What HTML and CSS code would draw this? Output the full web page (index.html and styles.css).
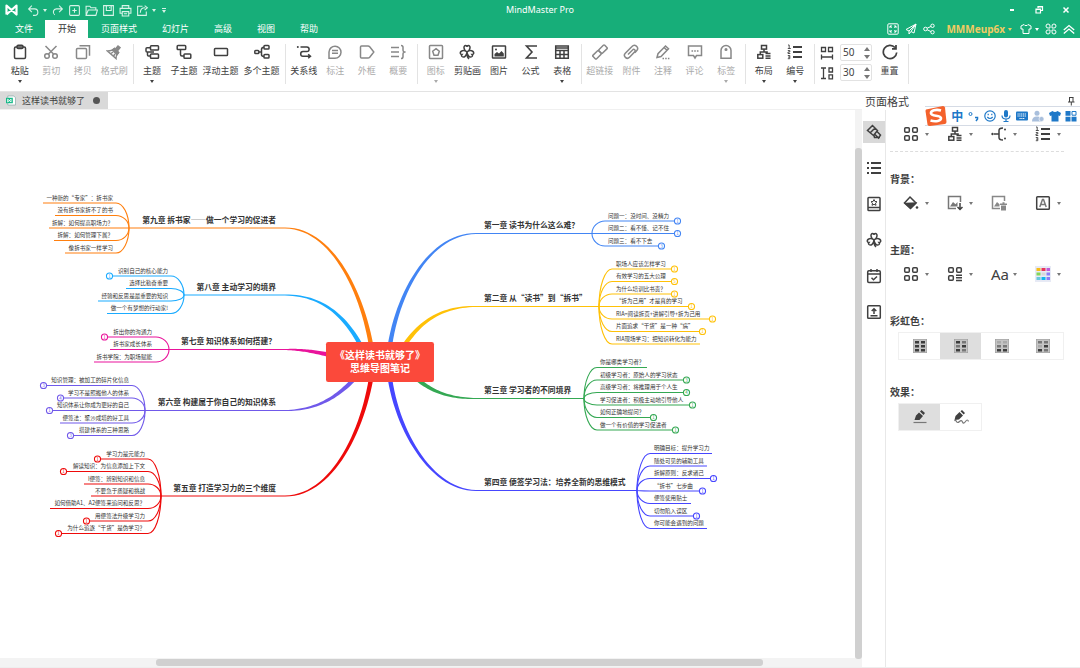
FILE: index.html
```
<!DOCTYPE html>
<html lang="zh-CN">
<head>
<meta charset="utf-8">
<meta name="viewport" content="width=device-width, initial-scale=1">
<title>MindMaster Pro</title>
<link rel="stylesheet" href="styles.css">
</head>
<body>
<svg class="sprite" aria-hidden="true">
  <symbol id="logo" viewBox="0 0 14 12"><path d="M2 10.500V1.500L12 10.500V1.500L2 10.500" fill="none" stroke="currentColor" stroke-width="2.200" stroke-linejoin="round"/></symbol>
  <symbol id="undo" viewBox="0 0 12 12"><path d="M4.500 1.500 1.500 4.500l3 3M2 4.500h5a3 3 0 0 1 0 6H5.500"/></symbol>
  <symbol id="redo" viewBox="0 0 12 12"><path d="M7.500 1.500l3 3-3 3M10 4.500H5a3 3 0 0 0-1.500 5.500"/></symbol>
  <symbol id="new" viewBox="0 0 12 12"><rect x="1.500" y="1.500" width="9" height="9" rx="1"/><path d="M6 4v4M4 6h4"/></symbol>
  <symbol id="open" viewBox="0 0 12 12"><path d="M1 10V2h3.500l1 1.500H10V5M1 10.500 3 5.500h8.500L10 10.500z"/></symbol>
  <symbol id="save" viewBox="0 0 12 12"><path d="M1.500 1.500h9v9h-9zM4 1.500V6h4.500V1.500M7 3v1"/></symbol>
  <symbol id="print" viewBox="0 0 12 12"><path d="M3 4V1.500h6V4M3 8.500H1V4h10v4.500H9M3 7h6v4H3zM4.500 9h3"/></symbol>
  <symbol id="export" viewBox="0 0 12 12"><path d="M6 2H1.500v8.500h8V7M4 8c0-3 1.500-4.500 4.500-4.500M8 1.500l2.500 2L8 5.500"/></symbol>
  <symbol id="full" viewBox="0 0 12 12"><rect x=".8" y=".8" width="10.400" height="10.400" rx="1"/><path d="M3 5V3h2M9 5V3H7M3 7v2h2M9 7v2H7M3 3l1.700 1.700M9 3 7.300 4.700M3 9l1.700-1.700M9 9 7.300 7.300"/></symbol>
  <symbol id="send" viewBox="0 0 12 12"><path d="M11 1 1 6.500l3 1.500L11 1 9 10 6 8.500M4 8v3l2-2.500L11 1"/></symbol>
  <symbol id="share" viewBox="0 0 12 12"><circle cx="2.500" cy="6" r="1.800"/><circle cx="9.500" cy="2.800" r="1.700"/><circle cx="9.500" cy="9.200" r="1.700"/><path d="m4.200 5.200 3.700-1.700M4.200 6.800l3.700 1.700"/></symbol>
  <symbol id="shirt" viewBox="0 0 12 12"><path d="M4 1.500 1 3v3h2v4.500h6V6h2V3L8 1.500C7.500 3 4.500 3 4 1.500z"/></symbol>
  <symbol id="apps" viewBox="0 0 12 12"><path d="M5 5V3.200A2 2 0 1 0 3.200 5zM7 5V3.200A2 2 0 1 1 8.800 5zM5 7v1.800A2 2 0 1 1 3.200 7zM7 7v1.800A2 2 0 1 0 8.800 7z"/></symbol>
  <symbol id="collapse" viewBox="0 0 12 12"><path d="m.8 7 5.200-4.500L11.200 7M.8 10.500 6 6l5.200 4.500" stroke-width="1.300"/></symbol>
  <symbol id="restore" viewBox="0 0 12 12"><path d="M5 4V2.500h4.500V6.500H8M3 5h4.500v4H3zM3 5.500h4.500M5 3h4.500" stroke-width="1.200"/></symbol>
  <symbol id="close" viewBox="0 0 12 12"><path d="m3.500 3.500 5 5M8.500 3.500l-5 5" stroke-width="1.500"/></symbol>
  <symbol id="pin" viewBox="0 0 12 12"><path d="M4 2.500h4.500M4.500 2.500v4.500M3 7h6.500M8 2.500V7M6.300 7v3.500" stroke-width="1"/></symbol>

  <symbol id="paste" viewBox="0 0 16 16"><rect x="2.500" y="3" width="11" height="11.500" rx="1.200"/><rect x="5" y="1.300" width="6" height="3.200" rx="1.200"/></symbol>
  <symbol id="cut" viewBox="0 0 16 16"><circle cx="4" cy="12" r="2.300"/><circle cx="12" cy="12" r="2.300"/><path d="M2.500 2 10.500 10M13.500 2 5.500 10"/></symbol>
  <symbol id="copy" viewBox="0 0 16 16"><rect x="1.500" y="4.500" width="10" height="10" rx="1"/><path d="M4.500 1.700h10v10"/></symbol>
  <symbol id="brush" viewBox="0 0 16 16"><path d="m9.500 5 2.500-3 2 1.700-2.500 3" fill="currentColor"/><path d="M1.500 7Q6 7 8.500 4.500L12.500 8.500Q10 11 10 14.500z"/><path d="M6.500 6 8.500 4.500 12.500 8.500 11 10.500z" fill="currentColor"/><path d="M5 9.500 7 8M7.500 12 9 10"/></symbol>
  <symbol id="topic" viewBox="0 0 16 16"><rect x="6.500" y="1.700" width="8" height="4.300" rx=".8"/><rect x="6.500" y="10" width="8" height="4.300" rx=".8"/><path d="M6.500 3.800H3q-1 0-1 1v2.200q0 1 1 1h7M3.500 8v3q0 1 1 1h2"/></symbol>
  <symbol id="subtopic" viewBox="0 0 16 16"><rect x="1.200" y="1.500" width="8.500" height="4" rx=".8"/><rect x="8" y="10" width="6.800" height="4.300" rx=".8"/><path d="M4.500 5.500v5q0 1.500 1.500 1.500h2"/></symbol>
  <symbol id="float" viewBox="0 0 16 16"><rect x="1.500" y="4.500" width="13" height="7" rx=".8"/></symbol>
  <symbol id="multi" viewBox="0 0 16 16"><rect x=".8" y="6.500" width="4" height="3" rx=".8"/><rect x="10" y="1.500" width="5" height="3.500" rx=".8"/><rect x="10" y="10.500" width="5" height="3.500" rx=".8"/><path d="M5 8h2.500M10 3.200q-2.500 0-2.500 2.300v5q0 2 2.500 2"/></symbol>
  <symbol id="relation" viewBox="0 0 16 16"><path d="M4.500 3h6.300a2.300 2.300 0 0 1 0 4.600H7a2.200 2.200 0 0 0 0 4.600h6.500M12.200 10.200l2.300 2-2.300 2"/><circle cx="1.800" cy="3" r="1" fill="currentColor" stroke="none"/></symbol>
  <symbol id="callout" viewBox="0 0 16 16"><path d="M2 14.300V8a6 6 0 1 1 6 6.200zM5 6.500h6M5 9.300h6"/></symbol>
  <symbol id="boundary" viewBox="0 0 16 16"><path d="M2.500 2h6.500q1 0 1.700.8L14.800 8l-4.100 5.200q-.7.800-1.700.8H2.500q-1 0-1-1V3q0-1 1-1z"/></symbol>
  <symbol id="summary" viewBox="0 0 16 16"><path d="M1 3.500h8M1 8h8M1 12.500h8M11 1.500q2 0 2 1.800v2.900q0 1.300 1.500 1.800-1.500.5-1.500 1.800v2.900q0 1.800-2 1.800"/></symbol>
  <symbol id="mark" viewBox="0 0 16 16"><rect x="1.500" y="1.500" width="13" height="13" rx=".8"/><path d="m8 4.700 3.300 2.500-1.300 4H6l-1.300-4z"/></symbol>
  <symbol id="clover" viewBox="0 0 16 16"><path d="M8 8C4.500 6.500 4 1.500 6.700 1.500Q8 1.500 8 3q0-1.500 1.300-1.500C12 1.500 11.500 6.500 8 8zM8 8c3-2.500 7-1.500 6.700 1.300q-.2 1.200-1.700 1.200 1 1.200 0 2C11 14 8.500 12 8 8zM8 8C5 5.500 1 6.500 1.300 9.300q.2 1.200 1.700 1.200-1 1.200 0 2C5 14 7.500 12 8 8zM8 8q-.3 5 2 7"/></symbol>
  <symbol id="image" viewBox="0 0 16 16"><rect x="1.500" y="2" width="13" height="12" rx=".5"/><path d="M3.500 12.500V10l2.500-2 2 1.500L10.500 7l2.300 2.500v3z" fill="currentColor" stroke="none"/><circle cx="5" cy="5.500" r="1" fill="currentColor" stroke="none"/></symbol>
  <symbol id="sigma" viewBox="0 0 16 16"><path d="M14 2H3.500L9 8l-5.500 6H14" stroke-width="1.600"/></symbol>
  <symbol id="table" viewBox="0 0 16 16"><path d="M1.700 2h12.600v12.300H1.700zM1.700 4h12.600M1.700 6.500h12.600M1.700 10.400h12.600M6 6.500v8M10 6.500v8"/></symbol>
  <symbol id="link" viewBox="0 0 16 16"><rect x="7" y="2.700" width="8" height="5" rx="1" transform="rotate(-45 11 5.200)"/><rect x="1" y="8.300" width="8" height="5" rx="1" transform="rotate(-45 5 10.800)"/></symbol>
  <symbol id="clip" viewBox="0 0 16 16"><path d="m5 10.500 5-5a1.500 1.500 0 0 1 2 2l-5.500 5.800a2.800 2.800 0 0 1-4.200-4L9 2.500a3 3 0 0 1 4.800 4l-2 2.300"/></symbol>
  <symbol id="note" viewBox="0 0 16 16"><path d="M2 13.500 3 9.700 10.500 2l3 2.800L6 12.500zM9 3.500l3 2.800"/><path d="M7.500 14.500h7" stroke-dasharray="1.500 1.200"/></symbol>
  <symbol id="comment" viewBox="0 0 16 16"><path d="M1.500 2h13v9.500h-5L8 14l-1.500-2.500h-5z"/><path d="M4.500 7h7" stroke-dasharray="1.600 1.100"/></symbol>
  <symbol id="tag" viewBox="0 0 16 16"><path d="M3 14.300V6.500a5 5 0 0 1 10 0v7.800z"/><circle cx="8" cy="5.500" r=".8" fill="currentColor"/></symbol>
  <symbol id="layout" viewBox="0 0 16 16"><rect x="5.500" y="1.500" width="5" height="3.600"/><rect x="1.800" y="10.600" width="5" height="3.600"/><path d="M8 5v3M4.300 10.500V8h7.500M9.500 9.500h5M9.500 12h5M9.500 14.300h5"/></symbol>
  <symbol id="number" viewBox="0 0 16 16"><path d="M6 3h9M6 8h9M6 13h9" stroke-width="1.900"/><path d="M1 1h1.200v3.500M.8 4.500h3M.8 6.500h2v1.500H1v1.500h2.300M.8 11.500h2v3.200h-2M1 13.100h1.800" stroke-width=".9"/></symbol>
  <symbol id="gap-x" viewBox="0 0 14 14"><path d="M1.500 1.500h4V5.500h-4zM8.500 1.500h4V5.500h-4zM1.500 8.500v5M12.500 8.500v5M1.500 11h11"/></symbol>
  <symbol id="gap-y" viewBox="0 0 14 14"><path d="M1 2h5M1 12.500h5M3.500 2v10.500M9 2h3.500v4H9zM9 8.800h3.500v4H9z"/></symbol>
  <symbol id="reset" viewBox="0 0 16 16"><path d="M13 3.500A6.700 6.700 0 1 0 14.700 8.500M14 1v3.800h-4" stroke-width="1.700"/></symbol>

  <symbol id="roller" viewBox="0 0 16 16"><path d="M6.500 1.500 1.500 6.500 7.500 11.500 11.500 6.500zM4 9 9 4M11 7.500l3.500 3.500-2 3-3.500-3.500M8 11.500l.5 2h5.500"/></symbol>
  <symbol id="outline" viewBox="0 0 16 16"><path d="M5 3h10M5 8h10M5 13h10M1 3h2M1 8h2M1 13h2" stroke-width="1.900"/></symbol>
  <symbol id="album" viewBox="0 0 16 16"><rect x="2" y="1.500" width="12" height="13" rx=".8"/><path d="M2 11.500h12"/><path d="m8 3.500 1 2 2 .2-1.500 1.400.5 2.200-2-1-2 1 .5-2.200L5 5.700l2-.2z" stroke-width="1"/></symbol>
  <symbol id="task" viewBox="0 0 16 16"><rect x="1.700" y="2.700" width="12.600" height="11.800" rx="1.200"/><path d="M1.700 6h12.600M5 1v3M11 1v3M5.500 9.800l2 2 3.500-3.300"/></symbol>
  <symbol id="upload" viewBox="0 0 16 16"><rect x="1.700" y="1.700" width="12.600" height="12.600" rx=".8"/><path d="M8 10V5M5.700 7 8 4.700 10.300 7M4.500 11.800h7"/></symbol>
  <symbol id="grid4" viewBox="0 0 16 16"><rect x="1.700" y="1.700" width="4.600" height="4.600" rx="1"/><rect x="9.700" y="1.700" width="4.600" height="4.600" rx="1"/><rect x="1.700" y="9.700" width="4.600" height="4.600" rx="1"/><rect x="9.700" y="9.700" width="4.600" height="4.600" rx="1"/></symbol>
  <symbol id="grid3" viewBox="0 0 16 16"><rect x="1.700" y="1.700" width="4.600" height="4.600" rx="1"/><rect x="9.700" y="1.700" width="4.600" height="4.600" rx="1"/><rect x="1.700" y="9.700" width="4.600" height="4.600" rx="1"/><path d="M9 9.200h6M9 11.800h6M9 14.400h6"/></symbol>
  <symbol id="connector" viewBox="0 0 16 16"><path d="M3 8h5M12 2q-4 0-4 2.500v7Q8 14 12 14"/><g fill="currentColor" stroke="none"><circle cx="1.500" cy="8" r="1.200"/><circle cx="14" cy="3.500" r="1"/><circle cx="14" cy="12.500" r="1"/></g></symbol>
  <symbol id="bucket" viewBox="0 0 16 16"><path d="m7 2 6 6-5.500 5.500L1.500 8z"/><path d="m2.500 8.500 10-.5-5 5z" fill="currentColor"/><circle cx="14" cy="12.500" r="1.300" fill="currentColor" stroke="none"/></symbol>
  <symbol id="bg-add" viewBox="0 0 16 16"><path d="M9 13.500H1.500v-12h12V7" stroke="#777"/><path d="M3 11.500 6 7l2.500 2.200L10.500 7v4.500z" fill="#777" stroke="none"/><path d="M13 8v6.500M10.500 12l2.500 2.500 2.500-2.500"/></symbol>
  <symbol id="bg-del" viewBox="0 0 16 16"><path d="M9 13.500H1.500v-12h12V6"/><path d="M3 11.500 6 7l2.500 2.200V11.500zM10 10.500h5v5h-5z" fill="currentColor" stroke="none"/><path d="M9 9.200h7M11.500 8h2"/></symbol>
  <symbol id="watermark" viewBox="0 0 16 16"><rect x="1.700" y="1.700" width="12.600" height="12.600" rx=".8"/><path d="m4.800 12 2.700-7.500h1L11.200 12M5.800 9.500h4.400" stroke="#777"/></symbol>
  <symbol id="palette" viewBox="0 0 16 16"><g stroke="none"><path d="M0 0h16v16H0z" fill="#e7eaf5"/><path d="M1.500 2h4v3h-4z" fill="#f6bd16"/><path d="M6.500 2h4v3h-4z" fill="#e8345a"/><path d="M11.500 2h3.500v3h-3.500z" fill="#c05ad8"/><path d="M1.500 6.500h4v3h-4z" fill="#83d65a"/><path d="M6.500 6.500h4v3h-4z" fill="#d8d8d8"/><path d="M11.500 6.500h3.500v3h-3.500z" fill="#8b7cf6"/><path d="M1.500 11h4v3h-4z" fill="#6ac8dc"/><path d="M6.500 11h4v3h-4z" fill="#12b5ee"/><path d="M11.500 11h3.500v3h-3.500z" fill="#8b7cf6"/></g></symbol>
  <symbol id="pen" viewBox="0 0 16 16"><path d="m2.500 11 1.500-4.500 3-3L11 7l-3.500 4zM8 2.500 9.500 1 13 4 11.500 6z" fill="currentColor" stroke="none"/><path d="M1.500 13.500h13" stroke="#777" stroke-width="1.200"/></symbol>
  <symbol id="sketch" viewBox="0 0 16 16"><path d="m1.500 11 1-4 4-4L10 6.500l-4 4zM7.500 2.200 9 1l3 3-1.300 1.600z" fill="currentColor" stroke="none"/><path d="M1.500 12q1-1.500 2 .5t3 0 3 .5 3-.5 3 0" stroke="#777" stroke-width="1.200"/></symbol>
</svg>

<header class="titlebar">
  <div class="quick">
    <svg class="logo"><use href="#logo"/></svg>
    <button class="qbtn" aria-label="撤销"><svg class="i13"><use href="#undo"/></svg><i class="caret"></i></button>
    <button class="qbtn" aria-label="重做"><svg class="i13"><use href="#redo"/></svg></button>
    <button class="qbtn" aria-label="新建"><svg class="i13"><use href="#new"/></svg></button>
    <button class="qbtn" aria-label="打开"><svg class="i13"><use href="#open"/></svg></button>
    <button class="qbtn" aria-label="保存"><svg class="i13"><use href="#save"/></svg></button>
    <button class="qbtn" aria-label="打印"><svg class="i13"><use href="#print"/></svg></button>
    <button class="qbtn" aria-label="导出"><svg class="i13"><use href="#export"/></svg><i class="caret"></i></button>
    <button class="qbtn more" aria-label="更多"><i class="caret"></i></button>
  </div>
  <h1 class="app-name">MindMaster Pro</h1>
  <div class="window-controls">
    <button class="wbtn" aria-label="最小化"><i class="minimize"></i></button>
    <button class="wbtn" aria-label="还原"><svg class="i12"><use href="#restore"/></svg></button>
    <button class="wbtn" aria-label="关闭"><svg class="i12"><use href="#close"/></svg></button>
  </div>
</header>

<nav class="menubar">
  <button class="menu">文件</button>
  <button class="menu active">开始</button>
  <button class="menu">页面样式</button>
  <button class="menu">幻灯片</button>
  <button class="menu">高级</button>
  <button class="menu">视图</button>
  <button class="menu">帮助</button>
  <div class="account">
    <button class="abtn" aria-label="全屏"><svg class="i12"><use href="#full"/></svg></button>
    <button class="abtn" aria-label="发送"><svg class="i12"><use href="#send"/></svg></button>
    <button class="abtn" aria-label="分享"><svg class="i12"><use href="#share"/></svg></button>
    <button class="abtn user">MMMeup6x<i class="caret"></i></button>
    <button class="abtn" aria-label="皮肤"><svg class="i12"><use href="#shirt"/></svg><i class="caret"></i></button>
    <button class="abtn" aria-label="应用"><svg class="i12"><use href="#apps"/></svg></button>
    <button class="abtn" aria-label="收起功能区"><svg class="i12"><use href="#collapse"/></svg></button>
  </div>
</nav>

<div class="ribbon">
  <div class="group"><div class="tools four">
    <button class="tool"><svg class="i16"><use href="#paste"/></svg>粘贴<i class="caret"></i></button>
    <button class="tool" disabled><svg class="i16"><use href="#cut"/></svg>剪切</button>
    <button class="tool" disabled><svg class="i16"><use href="#copy"/></svg>拷贝</button>
    <button class="tool" disabled><svg class="i16"><use href="#brush"/></svg>格式刷</button>
  </div></div>
  <div class="group"><div class="tools topics">
    <button class="tool"><svg class="i16"><use href="#topic"/></svg>主题<i class="caret"></i></button>
    <button class="tool"><svg class="i16"><use href="#subtopic"/></svg>子主题</button>
    <button class="tool"><svg class="i16"><use href="#float"/></svg>浮动主题</button>
    <button class="tool"><svg class="i16"><use href="#multi"/></svg>多个主题</button>
  </div></div>
  <div class="group"><div class="tools four">
    <button class="tool"><svg class="i16"><use href="#relation"/></svg>关系线</button>
    <button class="tool" disabled><svg class="i16"><use href="#callout"/></svg>标注</button>
    <button class="tool" disabled><svg class="i16"><use href="#boundary"/></svg>外框</button>
    <button class="tool" disabled><svg class="i16"><use href="#summary"/></svg>概要</button>
  </div></div>
  <div class="group"><div class="tools five">
    <button class="tool" disabled><svg class="i16"><use href="#mark"/></svg>图标<i class="caret"></i></button>
    <button class="tool"><svg class="i16"><use href="#clover"/></svg>剪贴画</button>
    <button class="tool"><svg class="i16"><use href="#image"/></svg>图片</button>
    <button class="tool"><svg class="i16"><use href="#sigma"/></svg>公式</button>
    <button class="tool"><svg class="i16"><use href="#table"/></svg>表格<i class="caret"></i></button>
  </div></div>
  <div class="group"><div class="tools five">
    <button class="tool" disabled><svg class="i16"><use href="#link"/></svg>超链接</button>
    <button class="tool" disabled><svg class="i16"><use href="#clip"/></svg>附件</button>
    <button class="tool" disabled><svg class="i16"><use href="#note"/></svg>注释</button>
    <button class="tool" disabled><svg class="i16"><use href="#comment"/></svg>评论</button>
    <button class="tool" disabled><svg class="i16"><use href="#tag"/></svg>标签<i class="caret"></i></button>
  </div></div>
  <div class="group"><div class="tools two">
    <button class="tool"><svg class="i16"><use href="#layout"/></svg>布局<i class="caret"></i></button>
    <button class="tool"><svg class="i16"><use href="#number"/></svg>编号<i class="caret"></i></button>
  </div></div>
  <div class="group">
    <div class="spacing">
      <div class="spin-row">
        <label for="gap-h" aria-label="水平间距"><svg class="i14"><use href="#gap-x"/></svg></label>
        <span class="spin"><input id="gap-h" type="number" value="50"><span class="steps"><i class="up"></i><i class="down"></i></span></span>
      </div>
      <div class="spin-row">
        <label for="gap-v" aria-label="垂直间距"><svg class="i14"><use href="#gap-y"/></svg></label>
        <span class="spin"><input id="gap-v" type="number" value="30"><span class="steps"><i class="up"></i><i class="down"></i></span></span>
      </div>
    </div>
    <button class="tool reset"><svg class="i16"><use href="#reset"/></svg>重置</button>
  </div>
</div>

<div class="workspace">
  <main class="document">
    <div class="doc-tabs">
      <button class="doc-tab"><svg class="doc-icon" viewBox="0 0 11 11"><path d="M2 .5h6.500L10.500 2.500v8H2z" fill="#fff" stroke="#8aa" stroke-width=".8"/><path d="M0 2.500h7.500v6H0z" fill="#12b886"/><path d="M1.800 7.200V4l3.800 3.200V4L1.800 7.200" fill="none" stroke="#fff" stroke-width=".9"/></svg>这样读书就够了<i class="dot"></i></button>
    </div>
    <div class="canvas-row">
      <div class="canvas-col">
        <div class="canvas"><svg class="map" id="map" viewBox="0 0 1539 986" preserveAspectRatio="xMinYMin meet"></svg></div>
        <div class="hscroll"><div class="hthumb"></div></div>
      </div>
      <div class="vscroll"><div class="vthumb"></div></div>
    </div>
  </main>

  <aside class="side">
    <div class="side-head"><h2 class="side-title">页面格式</h2><button class="pin" aria-label="固定"><svg class="i12"><use href="#pin"/></svg></button></div>
    <div class="side-body">
      <div class="strip">
        <button class="sbtn active" aria-label="页面格式"><svg class="i16"><use href="#roller"/></svg></button>
        <button class="sbtn" aria-label="大纲"><svg class="i16"><use href="#outline"/></svg></button>
        <button class="sbtn" aria-label="图标"><svg class="i16"><use href="#album"/></svg></button>
        <button class="sbtn" aria-label="剪贴画"><svg class="i16"><use href="#clover"/></svg></button>
        <button class="sbtn" aria-label="任务"><svg class="i16"><use href="#task"/></svg></button>
        <button class="sbtn" aria-label="导出"><svg class="i16"><use href="#upload"/></svg></button>
      </div>
      <div class="panel">
        <div class="options first">
          <button class="opt" aria-label="布局"><svg class="i16"><use href="#grid4"/></svg><i class="caret"></i></button>
          <button class="opt" aria-label="结构"><svg class="i16"><use href="#layout"/></svg><i class="caret"></i></button>
          <button class="opt" aria-label="连接线"><svg class="i16"><use href="#connector"/></svg><i class="caret"></i></button>
          <button class="opt" aria-label="编号"><svg class="i16"><use href="#number"/></svg><i class="caret"></i></button>
        </div>
        <section class="section">
          <h3 class="section-title">背景：</h3>
          <div class="options">
            <button class="opt" aria-label="背景颜色"><svg class="i16"><use href="#bucket"/></svg><i class="caret"></i></button>
            <button class="opt" aria-label="插入背景图"><svg class="i16"><use href="#bg-add"/></svg><i class="caret"></i></button>
            <button class="opt muted" aria-label="移除背景图"><svg class="i16"><use href="#bg-del"/></svg></button>
            <button class="opt" aria-label="水印"><svg class="i16"><use href="#watermark"/></svg><i class="caret"></i></button>
          </div>
        </section>
        <section class="section">
          <h3 class="section-title">主题：</h3>
          <div class="options">
            <button class="opt" aria-label="主题"><svg class="i16"><use href="#grid4"/></svg><i class="caret"></i></button>
            <button class="opt" aria-label="主题样式"><svg class="i16"><use href="#grid3"/></svg><i class="caret"></i></button>
            <button class="opt font" aria-label="主题字体"><span class="aa">Aa</span><i class="caret"></i></button>
            <button class="opt" aria-label="主题颜色"><svg class="i16"><use href="#palette"/></svg><i class="caret"></i></button>
          </div>
        </section>
        <section class="section">
          <h3 class="section-title">彩虹色：</h3>
          <div class="segments">
            <button class="seg" aria-label="彩虹色一"><svg class="i14" viewBox="0 0 14 14"><path class="sw-bg" d="M0 0h14v14H0z"/><path class="sw-d" d="M2 2h4v2.500H2zM8 2h4v2.500H8zM2 6h4v2.500H2zM8 6h4v2.500H8zM2 10h4v2.500H2zM8 10h4v2.500H8z"/></svg></button>
            <button class="seg active" aria-label="彩虹色二"><svg class="i14" viewBox="0 0 14 14"><path class="sw-bg" d="M0 0h14v14H0z"/><path class="sw-d" d="M2 2h4v2.500H2zM8 6h4v2.500H8zM2 10h4v2.500H2z"/><path class="sw-m" d="M8 2h4v2.500H8zM2 6h4v2.500H2zM8 10h4v2.500H8z"/></svg></button>
            <button class="seg" aria-label="彩虹色三"><svg class="i14" viewBox="0 0 14 14"><path class="sw-bg" d="M0 0h14v14H0z"/><path class="sw-l" d="M2 2h4v2.500H2zM8 2h4v2.500H8z"/><path class="sw-m" d="M2 6h4v2.500H2zM8 6h4v2.500H8z"/><path class="sw-d" d="M2 10h4v2.500H2zM8 10h4v2.500H8z"/></svg></button>
            <button class="seg" aria-label="彩虹色四"><svg class="i14" viewBox="0 0 14 14"><path class="sw-bg" d="M0 0h14v14H0z"/><path class="sw-l" d="M2 6h4v2.500H2z"/><path class="sw-m" d="M2 2h4v2.500H2zM8 2h4v2.500H8zM8 10h4v2.500H8z"/><path class="sw-d" d="M8 6h4v2.500H8zM2 10h4v2.500H2z"/></svg></button>
          </div>
        </section>
        <section class="section">
          <h3 class="section-title">效果：</h3>
          <div class="segments">
            <button class="seg active" aria-label="普通"><svg class="i16"><use href="#pen"/></svg></button>
            <button class="seg" aria-label="手绘"><svg class="i16"><use href="#sketch"/></svg></button>
          </div>
        </section>
      </div>
    </div>
  </aside>

  <div class="ime">
    <svg class="ime-logo" viewBox="0 0 22 22"><path d="M1 4.500 18 1q1.500 0 2 1.500L21.500 17q0 1.500-1.500 2L5 21q-2 0-2.500-1.500L.5 6q0-1 .5-1.500z" fill="#f4622c"/><path d="M16 5.500C11 4 5.500 5.500 6 8.500c.5 3 9.500 1.500 10 4.500.4 3-5.500 4-10.500 2.500" fill="none" stroke="#fff" stroke-width="2.600"/></svg>
    <span class="ime-mode">中</span>
    <svg class="ime-icon" viewBox="0 0 12 12"><circle cx="3.500" cy="4" r="1.500" fill="none" stroke="#1e78c8"/><path d="M8 7.500h2.500v1.500L9 11" fill="none" stroke="#1e78c8" stroke-width="1.500"/></svg>
    <svg class="ime-icon" viewBox="0 0 12 12"><circle cx="6" cy="6" r="5.200" fill="none" stroke="#1e78c8" stroke-width="1.200"/><path d="M4.200 3.800v1.400M7.800 3.800v1.400M3.300 7q2.700 3 5.400 0" fill="none" stroke="#1e78c8" stroke-width="1.200"/></svg>
    <svg class="ime-icon" viewBox="0 0 12 12"><rect x="4" y="0" width="4" height="7.500" rx="2" fill="#1e78c8"/><path d="M2 5.500q0 3.500 4 3.500t4-3.500M6 9v2.500M3.500 11.500h5" fill="none" stroke="#1e78c8" stroke-width="1.200"/></svg>
    <svg class="ime-icon" viewBox="0 0 12 12"><rect y="1.500" width="12" height="9" rx="1" fill="#1e78c8"/><path d="M1.500 4h9M1.500 6h9M3.500 8.500h5" fill="none" stroke="#fff" stroke-dasharray="1.200 .6"/></svg>
    <svg class="ime-icon" viewBox="0 0 12 12"><g fill="#a9bfdc"><circle cx="5" cy="3.200" r="2.500"/><path d="M0 11.500q0-5 5-5t5 5z"/><circle cx="9.500" cy="9" r="2.500" stroke="#fff" stroke-width=".6"/></g></svg>
    <svg class="ime-icon" viewBox="0 0 12 12"><path d="M3.500 1 0 3l1 3 1.500-.5V11.500h7V5.500L11 6l1-3L8.500 1Q6 3 3.500 1z" fill="#1e78c8"/></svg>
    <svg class="ime-icon" viewBox="0 0 12 12"><path d="M.5 1h5v4.700h-5zM.5 6.700h5v4.700h-5zM6.500 6.700h5v4.700h-5z" fill="#1e78c8"/><path d="M7 1.500h4v3.700H7z" fill="none" stroke="#1e78c8"/></svg>
  </div>
</div>
<script src="map.js"></script>
</body>
</html>
```
FILE: styles.css
```
:root {
  --green: #17ae79;
  --ink: #404040;
  --line: #e3e3e3;
  --ui: "Noto Sans CJK SC", "Noto Sans", sans-serif;
}
* { box-sizing: border-box; }
body {
  margin: 0;
  height: 100vh;
  display: flex;
  flex-direction: column;
  overflow: hidden;
  background: #fff;
  color: var(--ink);
  font-family: var(--ui);
  font-size: 9px;
}
button {
  margin: 0;
  padding: 0;
  border: 0;
  background: none;
  color: inherit;
  font: inherit;
}
svg { display: block; fill: none; stroke: currentColor; flex: none; }
h1, h2, h3 { margin: 0; }
.sprite { position: absolute; width: 0; height: 0; }
.i12 { width: 12px; height: 12px; stroke-width: 1; }
.i13 { width: 13px; height: 13px; stroke-width: 1; }
.i14 { width: 14px; height: 14px; stroke-width: 1.3; }
.i16 { width: 16px; height: 16px; stroke-width: 1.5; }
.caret {
  width: 0;
  height: 0;
  border: 2px solid transparent;
  border-top: 3px solid currentColor;
  border-bottom: 0;
}

.titlebar {
  display: grid;
  grid-template-columns: 1fr auto 1fr;
  align-items: center;
  height: 20px;
  background: var(--green);
  color: #fff;
}
.quick { display: flex; align-items: center; gap: 4px; padding-left: 4px; }
.logo { width: 15px; height: 12px; margin-right: 4px; }
.qbtn { display: flex; align-items: center; gap: 3px; color: #d8f3e8; }
.qbtn.more { margin-left: 2px; border-top: 1px solid; padding-top: 1px; }
.app-name { font: 9px/20px "Noto Sans", sans-serif; }
.window-controls { display: flex; justify-content: flex-end; gap: 15px; padding-right: 8px; }
.wbtn { display: grid; place-items: center; width: 12px; height: 14px; }
.minimize { width: 4px; height: 2px; background: #fff; }

.menubar {
  display: flex;
  align-items: stretch;
  height: 18px;
  padding-left: 2px;
  background: var(--green);
  color: #fff;
}
.menu { padding: 0 12px 0 13px; line-height: 18px; }
.menu.active { background: #fff; color: #333; }
.account { display: flex; align-items: center; gap: 6px; margin-left: auto; padding-right: 5px; }
.abtn { display: flex; align-items: center; gap: 3px; }
.user { color: #f0cb62; font: bold 10px/18px "Noto Sans", sans-serif; margin: 0 2px 0 5px; }

.ribbon { display: flex; height: 54px; padding-left: 2px; border-bottom: 1px solid var(--line); }
.group {
  display: flex;
  align-items: flex-start;
  margin: 6px 0 7px;
  padding: 0 3px 0 2px;
  border-right: 1px solid var(--line);
}
.tools { display: grid; }
.four { grid-template-columns: repeat(4, 1fr); width: 126px; }
.five { grid-template-columns: repeat(5, 1fr); width: 158px; }
.two { grid-template-columns: repeat(2, 1fr); width: 63px; }
.topics { grid-template-columns: 32px 32px 41px 41px; }
.tool {
  display: flex;
  flex-direction: column;
  align-items: center;
  line-height: 12px;
  white-space: nowrap;
}
.tool .i16 { margin-bottom: 5px; }
.tool .caret { margin-top: 3px; }
.tool:disabled { color: #aaa; }
.tool:disabled .i16 { color: #888; }
.spacing { display: grid; gap: 3px; padding-left: 3px; }
.spin-row { display: flex; align-items: center; gap: 6px; }
.spin {
  display: flex;
  align-items: center;
  width: 32px;
  height: 17px;
  border: 1px solid #e2e2e2;
  border-radius: 2px;
}
.spin input {
  flex: 1;
  min-width: 0;
  padding: 0 0 0 2px;
  border: 0;
  background: none;
  color: #444;
  font: 10px/15px "Noto Sans", sans-serif;
  appearance: textfield;
}
.spin input::-webkit-inner-spin-button { appearance: none; }
.steps { display: grid; gap: 4px; padding-right: 1px; color: #777; }
.up, .down { width: 0; height: 0; border: 3px solid transparent; }
.up { border-top: 0; border-bottom: 4px solid currentColor; }
.down { border-bottom: 0; border-top: 4px solid currentColor; }
.reset { width: 31px; margin-left: 2px; }

.workspace { position: relative; flex: 1; display: flex; min-height: 0; border-bottom: 1px solid #eee; }
.document { flex: 1; display: flex; flex-direction: column; min-width: 0; }
.doc-tabs { display: flex; height: 18px; border-bottom: 1px solid #f0f0f0; }
.doc-tab { display: flex; align-items: center; padding: 0 8px 0 6px; background: #d9d9d9; }
.doc-icon { width: 10px; height: 11px; margin-right: 6px; stroke: none; }
.dot { width: 7px; height: 7px; margin-left: 8px; border-radius: 50%; background: #555; }
.canvas-row { flex: 1; display: flex; min-height: 0; }
.canvas-col { flex: 1; display: flex; flex-direction: column; min-width: 0; }
.canvas { flex: 1; min-height: 0; overflow: hidden; }
.map { width: 100%; stroke: none; font-family: "Noto Sans CJK SC", sans-serif; }
.hscroll { height: 9px; padding: 1px 92px 1px 156px; background: #f3f3f3; }
.hthumb { height: 7px; border-radius: 3px; background: #d0d0d0; }
.vscroll { width: 7px; padding: 38px 0 8px; background: #f3f3f3; }
.vthumb { height: 100%; border-radius: 3px; background: #d0d0d0; }

.topic-text { font-size: 10px; fill: #333; }
.chapter-text { font-size: 14px; font-weight: 700; fill: #333; }
.root-box { fill: #fb493b; }
.root-text { font-size: 18px; font-weight: 700; fill: #fff; text-anchor: middle; }
.line { fill: none; stroke: currentColor; stroke-width: 2; }
.taper { fill: currentColor; }
.badge { fill: #fff; stroke: currentColor; stroke-width: 2; }
.badge-text { font-size: 8px; fill: currentColor; text-anchor: middle; }
.to-left { text-anchor: end; }

.side { display: flex; flex-direction: column; width: 218px; }
.side-head { display: flex; align-items: center; justify-content: space-between; height: 18px; padding: 0 3px; }
.side-title { font-size: 11px; font-weight: 400; line-height: 18px; }
.side-body { flex: 1; display: flex; }
.strip { display: flex; flex-direction: column; gap: 14px; width: 24px; padding: 11px 1px 0; border-right: 1px solid #e8e8e8; }
.sbtn { display: grid; place-items: center; width: 22px; height: 22px; }
.sbtn.active { background: #d9d9d9; }
.panel { flex: 1; min-width: 0; padding: 0 16px 0 4px; }
.options { display: grid; grid-template-columns: repeat(4, 44px); padding-left: 13px; }
.options.first { padding-top: 17px; padding-bottom: 10px; border-bottom: 1px dashed #ddd; }
.opt { display: flex; align-items: center; gap: 6px; height: 14px; }
.opt .caret { color: #777; }
.opt.muted { color: #888; }
.aa { font: 15px/14px "Noto Sans", sans-serif; }
.opt.font { gap: 4px; }
.section { height: 71px; padding-top: 20px; }
.section-title { font-size: 10px; line-height: 14px; margin-bottom: 10px; }
.segments { display: flex; width: fit-content; margin-top: -6px; margin-left: 8px; border: 1px solid #f0f0f0; }
.seg { display: grid; place-items: center; width: 41px; height: 26px; }
.seg.active { background: #dedede; }
.seg svg { stroke: none; }
.seg .i16 { stroke: currentColor; }
.sw-bg { fill: #c4c4c4; stroke: #999; stroke-width: 1; }
.sw-d { fill: #3d3d3d; }
.sw-m { fill: #777; }
.sw-l { fill: #aaa; }

/* Input method bar floats over the window edge. */
.ime {
  position: absolute;
  top: 14px;
  right: 0;
  display: flex;
  align-items: center;
  justify-content: space-between;
  width: 155px;
  height: 20px;
  padding-right: 3px;
  border: 1px solid #d5dbe5;
  border-right: 0;
  border-left: 0;
  background: #fff;
}
.ime-logo { width: 22px; height: 22px; stroke: none; }
.ime-icon { width: 12px; height: 12px; stroke: none; }
.ime-mode { color: #1e78c8; font-size: 12px; font-weight: 700; line-height: 18px; }
```
FILE: map.js
```
const SCALE = 9 / 5;
const TOP = 110;
const X = v => +(v * SCALE).toFixed(2);
const Y = v => +((v - TOP) * SCALE).toFixed(2);

// topics: [text, underline y, outer end x, child count or 0]
const chapters = [
  { side: 1, color: '#4285f4', title: '第一章 读书为什么这么难？', y: 233.5, spine: 592, text: 608,
    curve: [390, 345, 399, 288, 432, 233.5],
    topics: [['问题一：没时间、没精力', 221, 677, 1], ['问题二：看不懂、记不住', 233.5, 677, 1], ['问题三：看不下去', 246, 661, 3]] },
  { side: 1, color: '#ffc107', title: '第二章 从“读书”到“拆书”', y: 306.5, spine: 599, text: 616,
    curve: [404, 346, 421, 320, 443, 306.5],
    topics: [['职场人应该怎样学习', 269, 674, 1], ['有效学习的五大公理', 281.5, 674, 5], ['为什么培训比书贵？', 294, 674, 1],
      ['“拆为己用”才是真的学习', 306.5, 691, 1], ['RIA=阅读拆页+讲解引导+拆为己用', 319, 712, 1],
      ['片面追求“干货”是一种“病”', 331.5, 702, 1], ['RIA现场学习：把知识转化为能力', 344, 700, 0]] },
  { side: 1, color: '#34a853', title: '第三章 学习者的不同境界', y: 398.5, spine: 584, text: 600,
    curve: [416, 378, 432, 392, 450, 398.5],
    topics: [['你是哪类学习者？', 367.5, 647, 0], ['初级学习者：原始人的学习状态', 380, 686, 3], ['高级学习者：将推理用于个人生', 392.5, 686, 4],
      ['学习促进者：积极主动地引导他人', 405, 692, 1], ['如何正确地提问？', 417.5, 653, 1], ['做一个有价值的学习促进者', 430, 675, 1]] },
  { side: 1, color: '#4646ff', title: '第四章 便签学习法：培养全新的思维模式', y: 490.5, spine: 637, text: 654,
    curve: [390, 379, 399, 436, 434, 490.5],
    topics: [['明确目标：提升学习力', 453.5, 712, 0], ['随处可见的辅助工具', 466, 707, 0], ['拆解原则：反求诸己', 478.5, 713, 1],
      ['“拆书”七步曲', 491, 702, 1], ['便签使用贴士', 503.5, 691, 0], ['切勿陷入误区', 516, 696, 1], ['你可能会遇到的问题', 528.5, 707, 0]] },
  { side: -1, color: '#ff7f0e', title: '第九章 拆书家——做一个学习的促进者', y: 228, spine: 129, text: 113,
    curve: [371, 345, 361, 288, 330, 228],
    topics: [['一种新的“专家”：拆书家', 203, 43, 0], ['没有拆书家拆不了的书', 215.5, 55, 0], ['拆解：如何提高职场力？', 228, 49, 0],
      ['拆解：如何管理下属？', 240.5, 54, 0], ['像拆书家一样学习', 253, 65, 0]] },
  { side: -1, color: '#1aabff', title: '第八章 主动学习的境界', y: 295, spine: 184, text: 168,
    curve: [361, 346, 345, 316, 322, 295],
    topics: [['识别自己的核心能力', 276, 109, 1], ['选择比勤奋重要', 288.5, 126, 0], ['经验和反思是最重要的知识', 301, 98, 0],
      ['做一个有梦想的行动家!', 313.5, 107, 0]] },
  { side: -1, color: '#e9139b', title: '第七章 知识体系如何搭建？', y: 349.5, spine: 169, text: 152,
    curve: [330, 355, 312, 351, 300, 349.5],
    topics: [['拆出你的沟通力', 337, 104, 1], ['拆书家成长体系', 349.5, 110, 0], ['拆书学院：为职场赋能', 362, 94, 0]] },
  { side: -1, color: '#7059ea', title: '第六章 构建属于你自己的知识体系', y: 410.5, spine: 145, text: 129,
    curve: [355, 378, 336, 399, 314, 410.5],
    topics: [['知识管理：被加工的碎片化信息', 385.5, 43, 3], ['学习不是照搬他人的体系', 398, 60, 4], ['知识体系让你成为更好的自己', 410.5, 49, 1],
      ['便签法：聚沙成塔的好工具', 423, 60, 0], ['搭建体系的三种思路', 435.5, 70, 3]] },
  { side: -1, color: '#ee0a0a', title: '第五章 打造学习力的三个维度', y: 496, spine: 161, text: 145,
    curve: [371, 379, 361, 436, 330, 496],
    topics: [['学习力是元能力', 459, 97, 1], ['解读知识：为信息添加上下文', 471.5, 63, 1], ['I便签：辨别知识和信息', 484, 84, 0],
      ['不要急于质疑和挑战', 496, 91, 0], ['如何借助A1、A2便签来追问和反思？', 508.5, 50, 0],
      ['用便签法升级学习力', 521, 86, 1], ['为什么追逐“干货”是伪学习？', 533.5, 58, 1]] }
];

const svg = document.getElementById('map');
function add(parent, tag, attrs, text) {
  const el = document.createElementNS('http://www.w3.org/2000/svg', tag);
  for (const k in attrs) el.setAttribute(k, attrs[k]);
  if (text !== undefined) el.textContent = text;
  parent.appendChild(el);
  return el;
}

// Outline of a cubic curve whose width narrows from w0 to w1.
function taper(p, w0, w1) {
  const left = [], right = [], n = 28;
  for (let i = 0; i <= n; i++) {
    const t = i / n, s = 1 - t;
    const at = k => s * s * s * p[k] + 3 * s * s * t * p[k + 2] + 3 * s * t * t * p[k + 4] + t * t * t * p[k + 6];
    const d = k => s * s * (p[k + 2] - p[k]) + 2 * s * t * (p[k + 4] - p[k + 2]) + t * t * (p[k + 6] - p[k + 4]);
    const dx = d(0), dy = d(1), len = Math.hypot(dx, dy), w = (w0 + (w1 - w0) * t) / 2;
    const x = at(0), y = at(1), nx = -dy / len * w, ny = dx / len * w;
    left.push(X(x + nx) + ',' + Y(y + ny));
    right.unshift(X(x - nx) + ',' + Y(y - ny));
  }
  return 'M' + left.concat(right).join('L') + 'Z';
}

for (const c of chapters) {
  const g = add(svg, 'g', { color: c.color });
  const start = c.side > 0 ? 476 : 285;
  const anchor = c.side > 0 ? '' : ' to-left';
  add(g, 'path', { class: 'taper', d: taper(c.curve.concat(start, c.y), 4.5, 1) });
  add(g, 'path', { class: 'line', d: `M${X(start)} ${Y(c.y)}H${X(c.spine)}` });
  add(g, 'text', { class: 'chapter-text' + anchor, x: X(c.side > 0 ? 484 : 276), y: Y(c.y - 5) }, c.title);
  for (const [text, y, end, count] of c.topics) {
    const bend = c.spine + c.side * 13;
    add(g, 'path', { class: 'line',
      d: `M${X(c.spine)} ${Y(c.y)}C${X(c.spine)} ${Y(c.y + (y - c.y) * .55)} ${X(c.spine + c.side * 6)} ${Y(y)} ${X(bend)} ${Y(y)}H${X(end)}` });
    add(g, 'text', { class: 'topic-text' + anchor, x: X(c.text), y: Y(y - 3) }, text);
    if (count) {
      add(g, 'circle', { class: 'badge', cx: X(end + .5), cy: Y(y), r: 5.5 });
      add(g, 'text', { class: 'badge-text', x: X(end + .5), y: Y(y) + 3 }, count);
    }
  }
}

add(svg, 'rect', { class: 'root-box', x: X(326), y: Y(342), width: X(108), height: X(40), rx: 4 });
add(svg, 'text', { class: 'root-text', x: X(380), y: Y(359.5) }, '《这样读书就够了》');
add(svg, 'text', { class: 'root-text', x: X(380), y: Y(372.5) }, '思维导图笔记');
```
